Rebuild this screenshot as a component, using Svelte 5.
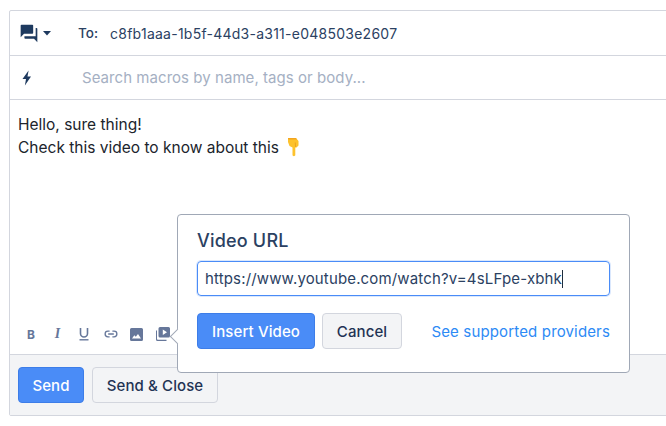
<script>
  const url = 'https://www.youtube.com/watch?v=4sLFpe-xbhk';
</script>

<div class="page">
  <div class="composer">
    <div class="row to">
      <div class="icons">
        <svg class="chat" width="20" height="20" viewBox="0 0 24 24"><path d="M21 6h-1v10H6.500v2c0 .6.4 1 1 1H18l4 4V7c0-.6-.4-1-1-1zM17 12V3c0-.6-.4-1-1-1H3c-.6 0-1 .4-1 1v14l4-4h10c.6 0 1-.4 1-1z"/></svg>
        <svg class="caret" width="10" height="5" viewBox="0 0 10 5"><path d="M1 0h8L5 4.500z"/></svg>
      </div>
      <span class="label">To:</span>
      <span class="addr">c8fb1aaa-1b5f-44d3-a311-e048503e2607</span>
    </div>
    <div class="row macros">
      <div class="icons">
        <svg width="12" height="16" viewBox="0 0 12 16"><path d="M7.600 0.500 1.500 9h3.500L3.900 15.500 10 6.600H6.500z"/></svg>
      </div>
      <span class="placeholder">Search macros by name, tags or body...</span>
    </div>
    <div class="editor">
      <div class="body">
        <p>Hello, sure thing!</p>
        <p>Check this video to know about this <svg class="emoji" width="14" height="20" viewBox="0 0 14 20"><path d="M1 1h8l2.500 3v4.500l-2 2h-1.200v7.500c0 1.500-2.800 1.500-2.800 0V10.500L2.500 9 1 5z" fill="#fdc22d"/><path d="M1 1h8l.8 1.500H1.300z" fill="#f3a41f"/><path d="M8.300 5.500 8.500 10" stroke="#eda522" fill="none"/></svg></p>
      </div>
      <div class="tools">
        <span class="tool b">B</span>
        <span class="tool i">I</span>
        <svg class="svg" width="14" height="14" viewBox="0 0 14 14"><path d="M3.500 1v5.500a3.500 3.500 0 0 0 7 0V1" fill="none" stroke-width="1.600"/><path d="M2.500 12.800h9" fill="none" stroke-width="1.400"/></svg>
        <svg class="svg" width="14" height="14" viewBox="0 0 15 14"><path d="M6 4H4.200a3 3 0 0 0 0 6H6M9 4h1.800a3 3 0 0 1 0 6H9M4.500 7h6" fill="none" stroke-width="1.400"/></svg>
        <svg class="svg fill" width="13" height="13" viewBox="0 0 13 13"><path fill-rule="evenodd" d="M1.500 0h10A1.500 1.500 0 0 1 13 1.500v10a1.500 1.500 0 0 1-1.500 1.500h-10A1.500 1.500 0 0 1 0 11.500v-10A1.500 1.500 0 0 1 1.500 0zM2 10.500h9L8 6 5.800 8.700 4.300 7.200z"/></svg>
        <svg class="svg fill" width="14" height="14" viewBox="0 0 14 14"><path d="M1 3.500H0v9A1.500 1.500 0 0 0 1.500 14H10.500v-1.300H1.800a.8.8 0 0 1-.8-.8z"/><path fill-rule="evenodd" d="M4 0h8.500A1.500 1.500 0 0 1 14 1.500V9a1.500 1.500 0 0 1-1.500 1.500H4A1.500 1.500 0 0 1 2.500 9V1.500A1.500 1.500 0 0 1 4 0zm2.800 2.600v5.300L11 5.200z"/></svg>
      </div>
    </div>
    <div class="footer">
      <button class="btn primary send">Send</button>
      <button class="btn plain close">Send &amp; Close</button>
    </div>
  </div>

  <div class="popover">
    <span class="arrow"></span>
    <h3>Video URL</h3>
    <div class="input">{url}<span class="cursor"></span></div>
    <div class="actions">
      <button class="btn primary insert">Insert Video</button>
      <button class="btn plain cancel">Cancel</button>
      <a href="#providers">See supported providers</a>
    </div>
  </div>
</div>

<style>
  :global(body) {
    margin: 0;
    background: #fff;
  }
  .page {
    position: relative;
    width: 666px;
    height: 426px;
    overflow: hidden;
    padding: 10px 0 0 9px;
    box-sizing: border-box;
    font-family: Inter, "Liberation Sans", sans-serif;
    color: #1f2d3d;
  }
  .composer {
    width: 680px;
    height: 406px;
    box-sizing: border-box;
    border: 1px solid #d3d6de;
    border-radius: 2px;
    display: flex;
    flex-direction: column;
  }
  .row {
    display: flex;
    align-items: center;
    border-bottom: 1px solid #d3d6de;
    box-sizing: border-box;
    flex: none;
  }
  .to { height: 45px; }
  .macros { height: 44px; }
  .icons {
    width: 68px;
    padding-left: 9px;
    box-sizing: border-box;
    display: flex;
    align-items: center;
    gap: 3px;
    fill: #1e3a5f;
  }
  .macros .icons { padding-left: 11px; width: 72px; }
  .label {
    font-size: 13.500px;
    font-weight: 500;
    color: #2b4162;
    width: 32px;
  }
  .addr {
    font-size: 14px;
    letter-spacing: 0.25px;
    color: #2b4162;
  }
  .placeholder {
    font-size: 15px;
    letter-spacing: 0.05px;
    color: #a5b0c3;
  }
  .editor {
    flex: 1;
    display: flex;
    flex-direction: column;
    justify-content: space-between;
    padding: 13px 8px 0;
  }
  .body p {
    margin: 0;
    font-size: 15.500px;
    line-height: 23px;
    color: #20242c;
    display: flex;
    align-items: center;
  }
  .emoji { margin-left: 8px; margin-top: -2px; }
  .tools {
    display: flex;
    align-items: center;
    gap: 12.500px;
    height: 18px;
    margin: 0 0 11px 6px;
    color: #66779a;
  }
  .tool {
    font-size: 12px;
    font-weight: 700;
    width: 14px;
    text-align: center;
    color: #66779a;
  }
  .tool.i { font-style: italic; font-family: "Liberation Serif", serif; font-size: 14px; }
  .svg { stroke: #66779a; flex: none; }
  .svg.fill { stroke: none; fill: #66779a; }
  .footer {
    height: 61px;
    box-sizing: border-box;
    background: #f3f4f6;
    border-top: 1px solid #d3d6de;
    padding: 12px 8px;
    display: flex;
    gap: 8px;
    flex: none;
  }
  .btn {
    height: 36px;
    box-sizing: border-box;
    border-radius: 4px;
    font-family: inherit;
    font-size: 15px;
    letter-spacing: 0.1px;
    font-weight: 500;
    padding: 0;
    cursor: pointer;
  }
  .primary {
    background: #4a8cf7;
    border: 1px solid #3d7de8;
    color: #fff;
  }
  .plain {
    background: #f3f4f6;
    border: 1px solid #d3d6de;
    color: #1f3354;
  }
  .send { width: 66px; }
  .close { width: 126px; }
  .insert { width: 118px; }
  .cancel { width: 80px; }
  .popover {
    position: absolute;
    left: 177px;
    top: 214px;
    width: 453px;
    height: 159px;
    box-sizing: border-box;
    background: #fff;
    border: 1px solid #a0a8b6;
    border-radius: 4px;
    padding: 15px 19px;
  }
  .arrow {
    position: absolute;
    left: -6px;
    top: 116px;
    width: 10px;
    height: 10px;
    background: #fff;
    border-left: 1px solid #a0a8b6;
    border-bottom: 1px solid #a0a8b6;
    transform: rotate(45deg);
  }
  h3 {
    margin: 0 0 9px;
    font-size: 18px;
    letter-spacing: 0.2px;
    line-height: 22px;
    font-weight: 500;
    color: #2b4162;
  }
  .input {
    height: 35px;
    width: 413px;
    box-sizing: border-box;
    border: 1px solid #4a8cf7;
    box-shadow: 0 0 0 1px #dbe8fd;
    border-radius: 4px;
    padding: 0 7px;
    font-size: 15px;
    letter-spacing: 0.15px;
    color: #2b4162;
    display: flex;
    align-items: center;
    white-space: nowrap;
  }
  .cursor {
    display: inline-block;
    width: 1px;
    height: 18px;
    background: #1f2d3d;
  }
  .actions {
    display: flex;
    align-items: center;
    gap: 7px;
    margin-top: 17px;
    width: 413px;
  }
  a {
    margin-left: auto;
    font-size: 15px;
    letter-spacing: 0.15px;
    color: #2d8af5;
    text-decoration: none;
  }
</style>
